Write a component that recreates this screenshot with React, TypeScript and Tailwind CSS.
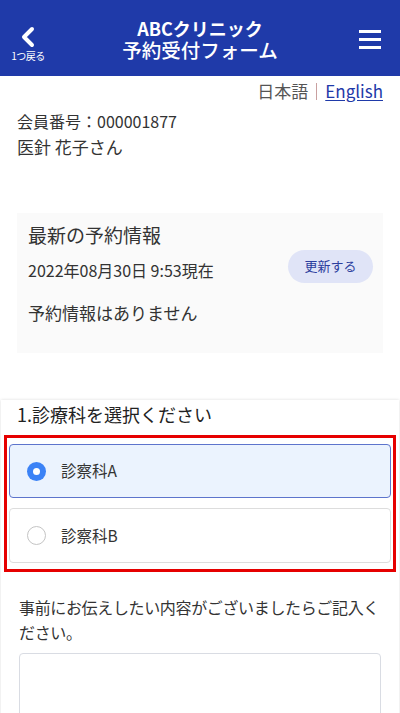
import React from "react";

export default function App() {
  const font = { fontFamily: '"Noto Sans CJK JP", "Noto Sans", sans-serif' };
  return (
    <div className="w-[400px] min-h-[713px] bg-white text-[#333] overflow-hidden" style={font}>
      <header className="h-[76px] bg-[#1f3aa9] flex items-center justify-between text-white">
        <div className="w-[56px] flex flex-col items-center pt-[12px]">
          <svg width="16" height="22" viewBox="0 0 16 22" fill="none">
            <path d="M12 3 L4 11 L12 19" stroke="white" strokeWidth="4" strokeLinecap="round" strokeLinejoin="round" />
          </svg>
          <span className="text-[10px] leading-[12px] mt-[2px] tracking-[-0.5px]">1つ戻る</span>
        </div>
        <div className="flex flex-col items-center mt-[1px]">
          <div className="text-[18px] leading-[22px] font-bold">ABCクリニック</div>
          <div className="text-[19.5px] leading-[22px] font-medium">予約受付フォーム</div>
        </div>
        <div className="w-[56px] flex justify-center pr-[4px] pt-[2px]">
          <div className="flex flex-col gap-[5px]">
            <span className="block w-[22px] h-[3px] bg-white" />
            <span className="block w-[22px] h-[3px] bg-white" />
            <span className="block w-[22px] h-[3px] bg-white" />
          </div>
        </div>
      </header>

      <div className="flex justify-end items-center pr-[17px] mt-[3px] text-[17px] leading-[24px]">
        <span className="text-[#555]">日本語</span>
        <span className="mx-[8px] w-[1px] h-[17px] bg-[#c9a0a0]" />
        <span className="text-[#1f3aa9] underline underline-offset-2">English</span>
      </div>

      <div className="px-[17px] mt-[6px]">
        <div className="text-[16px] leading-[24px] text-[#333]">会員番号：000001877</div>
        <div className="text-[17px] leading-[26px] mt-[1px] text-[#333]">医針 花子さん</div>
      </div>

      <div className="mx-[17px] mt-[53px] bg-[#fafafa] h-[140px] px-[11px] pt-[8px]">
        <div className="text-[19px] leading-[28px] text-[#333]">最新の予約情報</div>
        <div className="flex items-center justify-between mt-[8px]">
          <div className="text-[16px] leading-[26px] text-[#333]">2022年08月30日 9:53現在</div>
          <div className="w-[85px] h-[33px] rounded-full bg-[#e0e4f7] flex items-center justify-center text-[13px] text-[#2c3e9e] mr-[-1px] -mt-[8px]">
            更新する
          </div>
        </div>
        <div className="text-[17px] leading-[26px] mt-[17px] text-[#333]">予約情報はありません</div>
      </div>

      <div className="mt-[47px] mx-[1px] shadow-[0_0_3px_rgba(0,0,0,0.14)] pb-[20px]">
        <div className="pl-[16px] pt-[1px] text-[18px] leading-[26px] text-[#222]">1.診療科を選択ください</div>
        <div className="mx-[3px] mt-[8px] border-[3px] border-[#e60000] px-[2px] py-[6px] flex flex-col gap-[10px]">
          <div className="h-[54px] rounded-[4px] border border-[#5d74cc] bg-[#ebf3fe] flex items-center pl-[17px]">
            <span className="w-[19px] h-[19px] rounded-full bg-[#3b82f6] flex items-center justify-center">
              <span className="w-[7px] h-[7px] rounded-full bg-white" />
            </span>
            <span className="ml-[15px] text-[15.5px] text-[#333]">診察科A</span>
          </div>
          <div className="h-[55px] rounded-[4px] border border-[#dddddd] bg-white flex items-center pl-[17px]">
            <span className="w-[19px] h-[19px] rounded-full border border-[#c4c4c4] bg-white" />
            <span className="ml-[15px] text-[15.5px] text-[#333]">診察科B</span>
          </div>
        </div>
        <div className="px-[18px] mt-[23px] text-[16px] leading-[25px] tracking-[-0.35px] text-[#333]">
          事前にお伝えしたい内容がございましたらご記入ください。
        </div>
        <div className="mx-[18px] mt-[8px] h-[100px] rounded-[4px] border border-[#d9dce3] bg-white" />
      </div>
    </div>
  );
}
